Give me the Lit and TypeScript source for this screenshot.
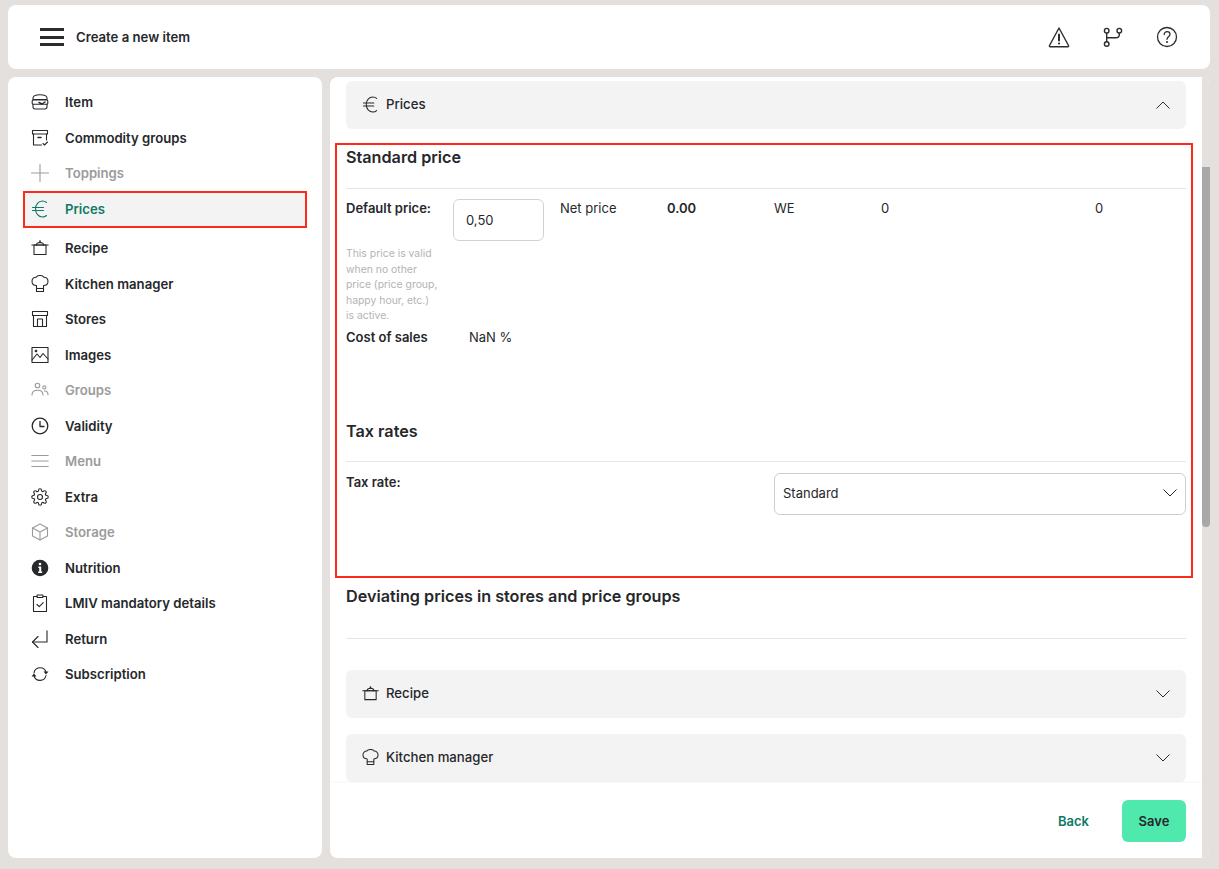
import { LitElement, css, html, svg } from "lit";
import { customElement } from "lit/decorators.js";
import { classMap } from "lit/directives/class-map.js";

const ic = (body: unknown) => html`<svg class="ic" viewBox="0 0 18 18" width="18" height="18" fill="none" stroke="currentColor" stroke-width="1.1" stroke-linecap="round" stroke-linejoin="round">${body}</svg>`;

const icons: Record<string, unknown> = {
  burger: ic(svg`<path d="M2 6.5V5c0-2 2-3.3 7-3.3S16 3 16 5v1.5z"/><rect x="1.2" y="7" width="15.6" height="4.2" rx="1"/><path d="M2 11.2v2.600c0 1.500 1 2.200 2.200 2.200h9.600c1.200 0 2.200-.7 2.200-2.200v-2.600"/><path d="M8 9.500l3 1.500 3-2" stroke-width="1.5"/>`),
  archive: ic(svg`<path d="M1.5 1.5h15V5h-15z"/><path d="M2.5 5v11h8M15.500 5v6"/><path d="M7 8.500h3" stroke-width="1.5"/><path d="M12 14.500l1.500 1.500 3-3"/>`),
  plus: ic(svg`<path d="M9 .5v17M.5 9h17"/>`),
  euro: ic(svg`<path d="M15.5 2.5C14.3 1.4 13 1 11.5 1c-4 0-7 3.500-7 8s3 8 7 8c1.500 0 2.800-.4 4-1.500"/><path d="M1.500 7.500h11M1.500 10.500h11"/>`),
  pot: ic(svg`<path d="M3 6h12v9.500H3z"/><path d="M.8 6h16.400"/><path d="M5.500 6c0-1.600 1.300-2.500 3.500-2.500s3.500.9 3.500 2.500"/><path d="M9 3.500V2" stroke-width="1.6"/>`),
  chef: ic(svg`<path d="M5.500 16.500h7v-6C15.500 10.500 17 8.500 17 6.200c0-2.500-2-4.200-4.200-4C12 1 10.600.5 9 .5S6 1 5.200 2.200C3 2 1 3.700 1 6.200c0 2.300 1.500 4.300 4.500 4.300z"/><path d="M5.500 13.500h7"/>`),
  store: ic(svg`<path d="M1.500 1.500h15v4h-15z"/><path d="M2.500 5.500v11h13v-11"/><path d="M6.500 16.500V9h5v7.500"/>`),
  image: ic(svg`<rect x="1" y="1.500" width="16" height="15"/><path d="M1 14l5-6 3 3.500 3-4 5 5.500"/><circle cx="5" cy="5" r=".8"/>`),
  users: ic(svg`<circle cx="6.500" cy="4.500" r="2.300"/><path d="M1 14c0-3 2.400-4.800 5.500-4.800S12 11 12 14"/><circle cx="13.300" cy="6.500" r="1.600"/><path d="M13.500 10c2 0 3.500 1.500 3.500 3.800"/>`),
  clock: ic(svg`<circle cx="9" cy="9" r="7.800" stroke-width="1.3"/><path d="M9 4.500v5h4" stroke-width="1.3"/>`),
  menu: ic(svg`<path d="M.8 3.500h16.400M.8 9h16.400M.8 14.500h16.400"/>`),
  gear: ic(svg`<circle cx="9" cy="9" r="2.500"/><path transform="scale(.75)" stroke-width="1.5" d="M19.400 15a1.650 1.650 0 0 0 .33 1.820l.06.06a2 2 0 0 1 0 2.830 2 2 0 0 1-2.830 0l-.06-.06a1.650 1.650 0 0 0-1.820-.33 1.650 1.650 0 0 0-1 1.510V21a2 2 0 0 1-2 2 2 2 0 0 1-2-2v-.09A1.650 1.650 0 0 0 9 19.400a1.650 1.650 0 0 0-1.820.33l-.06.06a2 2 0 0 1-2.830 0 2 2 0 0 1 0-2.830l.06-.06a1.650 1.650 0 0 0 .33-1.820 1.650 1.650 0 0 0-1.510-1H3a2 2 0 0 1-2-2 2 2 0 0 1 2-2h.09A1.650 1.650 0 0 0 4.600 9a1.650 1.650 0 0 0-.33-1.820l-.06-.06a2 2 0 0 1 0-2.830 2 2 0 0 1 2.830 0l.06.06a1.650 1.650 0 0 0 1.820.33H9a1.650 1.650 0 0 0 1-1.510V3a2 2 0 0 1 2-2 2 2 0 0 1 2 2v.09a1.650 1.650 0 0 0 1 1.510 1.650 1.650 0 0 0 1.820-.33l.06-.06a2 2 0 0 1 2.830 0 2 2 0 0 1 0 2.830l-.06.06a1.650 1.650 0 0 0-.33 1.820V9a1.650 1.650 0 0 0 1.510 1H21a2 2 0 0 1 2 2 2 2 0 0 1-2 2h-.09a1.650 1.650 0 0 0-1.510 1z"/>`),
  cube: ic(svg`<path d="M9 1l7.500 4v8L9 17l-7.500-4V5z"/><path d="M1.500 5L9 9l7.500-4M9 9v8"/>`),
  info: html`<svg class="ic" viewBox="0 0 18 18" width="18" height="18"><circle cx="9" cy="9" r="8.3" fill="currentColor"/><circle cx="9" cy="5" r="1.3" fill="#fff"/><path d="M7.400 7.500h2.800v5h1V14H7.200v-1.500h1V9h-.8z" fill="#fff"/></svg>`,
  clipboard: ic(svg`<path d="M6 2.500H2.500v15h13v-15H12"/><rect x="6" y="1" width="6" height="2.500" rx=".4"/><path d="M6 10.500l2.200 2.200 4-4"/>`),
  ret: ic(svg`<path d="M16 .8V12H1.500"/><path d="M7 6.500L1.500 12 7 17.500"/>`),
  sync: ic(svg`<path d="M3 8A6.200 6.200 0 0 1 15 7"/><path d="M15 10.500A6.200 6.200 0 0 1 3 11"/><path d="M12.500 6.500h5L15 9.500z" fill="currentColor" stroke="none"/><path d="M.5 11.500h5L3 8.500z" fill="currentColor" stroke="none"/>`),
};

const chevron = (up: boolean) => html`<svg class="chev" viewBox="0 0 14 8" width="14" height="8" fill="none" stroke="currentColor" stroke-width="1"><path d=${up ? "M.5 7.500L7 1l6.500 6.500" : "M.5.5L7 7 13.500.5"} /></svg>`;

interface NavItem { label: string; icon: string; muted?: boolean; active?: boolean }

const navItems: NavItem[] = [
  { label: "Item", icon: "burger" },
  { label: "Commodity groups", icon: "archive" },
  { label: "Toppings", icon: "plus", muted: true },
  { label: "Prices", icon: "euro", active: true },
  { label: "Recipe", icon: "pot" },
  { label: "Kitchen manager", icon: "chef" },
  { label: "Stores", icon: "store" },
  { label: "Images", icon: "image" },
  { label: "Groups", icon: "users", muted: true },
  { label: "Validity", icon: "clock" },
  { label: "Menu", icon: "menu", muted: true },
  { label: "Extra", icon: "gear" },
  { label: "Storage", icon: "cube", muted: true },
  { label: "Nutrition", icon: "info" },
  { label: "LMIV mandatory details", icon: "clipboard" },
  { label: "Return", icon: "ret" },
  { label: "Subscription", icon: "sync" },
];

@customElement("app-root")
export class AppRoot extends LitElement {
  static styles = css`
    :host {
      display: block;
      height: 869px;
      box-sizing: border-box;
      padding: 5px 9px 11px 8px;
      background: #e3e0de;
      font-family: Inter, "Liberation Sans", sans-serif;
      font-size: 13px;
      color: #26282b;
      overflow: hidden;
    }

    .page { display: flex; flex-direction: column; gap: 8px; height: 100%; }

    .header {
      flex: none;
      height: 64px;
      display: flex;
      align-items: center;
      background: #fff;
      border-radius: 8px;
      padding: 0 31px 0 32px;
    }
    .burger { display: flex; flex-direction: column; gap: 4.5px; width: 24px; margin-right: 12px; }
    .burger span { height: 3px; background: #2b2c2e; }
    .header-title { font-size: 13.17px; font-weight: 600; flex: 1; }
    .header-icons { display: flex; gap: 30px; }
    .header-icons svg { display: block; color: #2b2c2e; }

    .body { flex: 1; min-height: 0; display: flex; gap: 8px; }

    .sidebar {
      flex: none;
      width: 314px;
      box-sizing: border-box;
      background: #fff;
      border-radius: 8px;
      padding: 7.5px 15px;
    }
    .nav-item {
      height: 35.5px;
      box-sizing: border-box;
      display: flex;
      align-items: center;
      gap: 16px;
      padding-left: 8px;
      font-size: 13.17px;
      font-weight: 600;
    }
    .nav-item .ic { flex: none; }
    .nav-item.muted { color: #9b9b9b; }
    .nav-item.active {
      height: 37px;
      margin-bottom: 2.5px;
      padding-left: 6px;
      padding-bottom: 1px;
      color: #0f7a66;
      background: #f3f3f3;
      border: 2px solid #fb2a1b;
    }

    .main {
      flex: 1;
      min-width: 0;
      display: flex;
      background: #fff;
      border-radius: 8px;
      overflow: hidden;
    }
    .column { flex: 1; min-width: 0; display: flex; flex-direction: column; }
    .scroll { flex: 1; min-height: 0; overflow: hidden; padding: 4px 16px 0 16px; }

    .accordion {
      height: 48px;
      box-sizing: border-box;
      display: flex;
      align-items: center;
      background: #f3f3f3;
      border-radius: 6px;
      padding: 0 15px 1px 16px;
      font-size: 13.2px;
      font-weight: 500;
    }
    .accordion .ic { width: 17px; height: 17px; margin-right: 7px; flex: none; }
    .accordion span { flex: 1; padding-bottom: 1px; }
    .accordion .chev { color: #2b2c2e; margin-right: 1px; }

    .marked {
      margin: 14px -7px 0 -11px;
      height: 435px;
      box-sizing: border-box;
      border: 2px solid #fb2a1b;
      padding: 0 5px 0 9px;
    }
    .title { margin: 0; font-size: 16.2px; line-height: 22px; font-weight: 600; }
    .std-title { margin-top: 1px; }
    .rule { height: 1px; background: #e6e6e6; }
    .std-rule { margin-top: 20px; }

    .grid {
      display: grid;
      grid-template-columns: repeat(8, 91px);
      column-gap: 16px;
    }
    .price-row { margin-top: 10px; height: 42px; }
    .cell { line-height: 18px; }
    .strong { font-weight: 600; }
    .input {
      box-sizing: border-box;
      height: 42px;
      border: 1px solid #cfd3d8;
      border-radius: 6px;
      padding: 0 12px;
      display: flex;
      align-items: center;
    }
    .help {
      margin-top: 5px;
      width: 93px;
      font-size: 10.4px;
      line-height: 15.5px;
      color: #b4b4b4;
    }
    .cost { margin-top: 4px; display: flex; line-height: 18px; }
    .cost .strong { width: 123px; }

    .tax-title { margin-top: 74px; }
    .tax-rule { margin-top: 19px; }
    .tax-row { margin-top: 11px; height: 42px; }
    .select {
      grid-column: 5 / span 4;
      box-sizing: border-box;
      height: 42px;
      border: 1px solid #cfcfcf;
      border-radius: 6px;
      padding: 0 8px 1px 8px;
      display: flex;
      align-items: center;
      justify-content: space-between;
    }

    .deviating { margin-top: 7px; }
    .deviating .rule { margin-top: 31px; }
    .after { margin-top: 31px; display: flex; flex-direction: column; gap: 16px; }

    .footer {
      flex: none;
      height: 75px;
      box-sizing: border-box;
      display: flex;
      align-items: center;
      justify-content: flex-end;
      gap: 33px;
      padding: 0 16px 0 0;
      box-shadow: 0 -1px 2px rgba(0, 0, 0, 0.04);
      background: #fff;
    }
    .back { color: #0f7a66; font-weight: 600; }
    .save {
      width: 64px;
      height: 42px;
      display: flex;
      align-items: center;
      justify-content: center;
      background: #50e9ad;
      border-radius: 6px;
      font-weight: 600;
    }

    .track { flex: none; width: 8px; background: #e3e0de; }
    .thumb { width: 8px; height: 360px; margin-top: 90px; background: #a8a8a8; border-radius: 0 0 4px 4px; }
  `;

  render() {
    return html`
      <div class="page">
        <header class="header">
          <div class="burger"><span></span><span></span><span></span></div>
          <div class="header-title">Create a new item</div>
          <div class="header-icons">
            <svg viewBox="0 0 24 24" width="24" height="24" fill="none" stroke="currentColor" stroke-width="1.4" stroke-linejoin="round"><path d="M12 3L2.500 20.500c-.3.6 0 1.200.7 1.200h17.600c.7 0 1-.6.7-1.200z"/><path d="M12 9.500v6" stroke-width="2" stroke-linecap="round"/><circle cx="12" cy="18.500" r="1.100" fill="currentColor" stroke="none"/></svg>
            <svg viewBox="0 0 24 24" width="24" height="24" fill="none" stroke="currentColor" stroke-width="1.4"><circle cx="5.700" cy="5.700" r="2.300"/><circle cx="5.700" cy="19" r="2.300"/><circle cx="18.300" cy="5.700" r="2.300"/><path d="M5.700 8v8.700M5.700 12.700h9c2.200 0 3.600-1.200 3.600-3V8"/></svg>
            <svg viewBox="0 0 24 24" width="24" height="24" fill="none" stroke="currentColor" stroke-width="1.3"><circle cx="12" cy="12" r="9.500"/><path d="M9.200 9.500c0-1.800 1.300-2.900 2.900-2.900s2.900 1.100 2.900 2.700c0 2.400-3 2.500-3 5" stroke-linecap="round"/><circle cx="12" cy="17" r="1" fill="currentColor" stroke="none"/></svg>
          </div>
        </header>
        <div class="body">
          <nav class="sidebar">
            ${navItems.map(
              (item) => html`
                <div class=${classMap({ "nav-item": true, muted: !!item.muted, active: !!item.active })}>
                  ${icons[item.icon]}<span>${item.label}</span>
                </div>
              `
            )}
          </nav>
          <main class="main">
            <div class="column">
              <div class="scroll">
                <div class="accordion">${icons.euro}<span>Prices</span>${chevron(true)}</div>
                <section class="marked">
                  <h2 class="title std-title">Standard price</h2>
                  <div class="rule std-rule"></div>
                  <div class="grid price-row">
                    <div class="cell strong">Default price:</div>
                    <div class="input">0,50</div>
                    <div class="cell">Net price</div>
                    <div class="cell strong">0.00</div>
                    <div class="cell">WE</div>
                    <div class="cell">0</div>
                    <div></div>
                    <div class="cell">0</div>
                  </div>
                  <div class="help">This price is valid when no other price (price group, happy hour, etc.) is active.</div>
                  <div class="cost"><div class="strong">Cost of sales</div><div>NaN %</div></div>
                  <h2 class="title tax-title">Tax rates</h2>
                  <div class="rule tax-rule"></div>
                  <div class="grid tax-row">
                    <div class="cell strong">Tax rate:</div>
                    <div class="select"><span>Standard</span>${chevron(false)}</div>
                  </div>
                </section>
                <section class="deviating">
                  <h2 class="title">Deviating prices in stores and price groups</h2>
                  <div class="rule"></div>
                </section>
                <div class="after">
                  <div class="accordion">${icons.pot}<span>Recipe</span>${chevron(false)}</div>
                  <div class="accordion">${icons.chef}<span>Kitchen manager</span>${chevron(false)}</div>
                </div>
              </div>
              <footer class="footer">
                <div class="back">Back</div>
                <div class="save">Save</div>
              </footer>
            </div>
            <div class="track"><div class="thumb"></div></div>
          </main>
        </div>
      </div>
    `;
  }
}
